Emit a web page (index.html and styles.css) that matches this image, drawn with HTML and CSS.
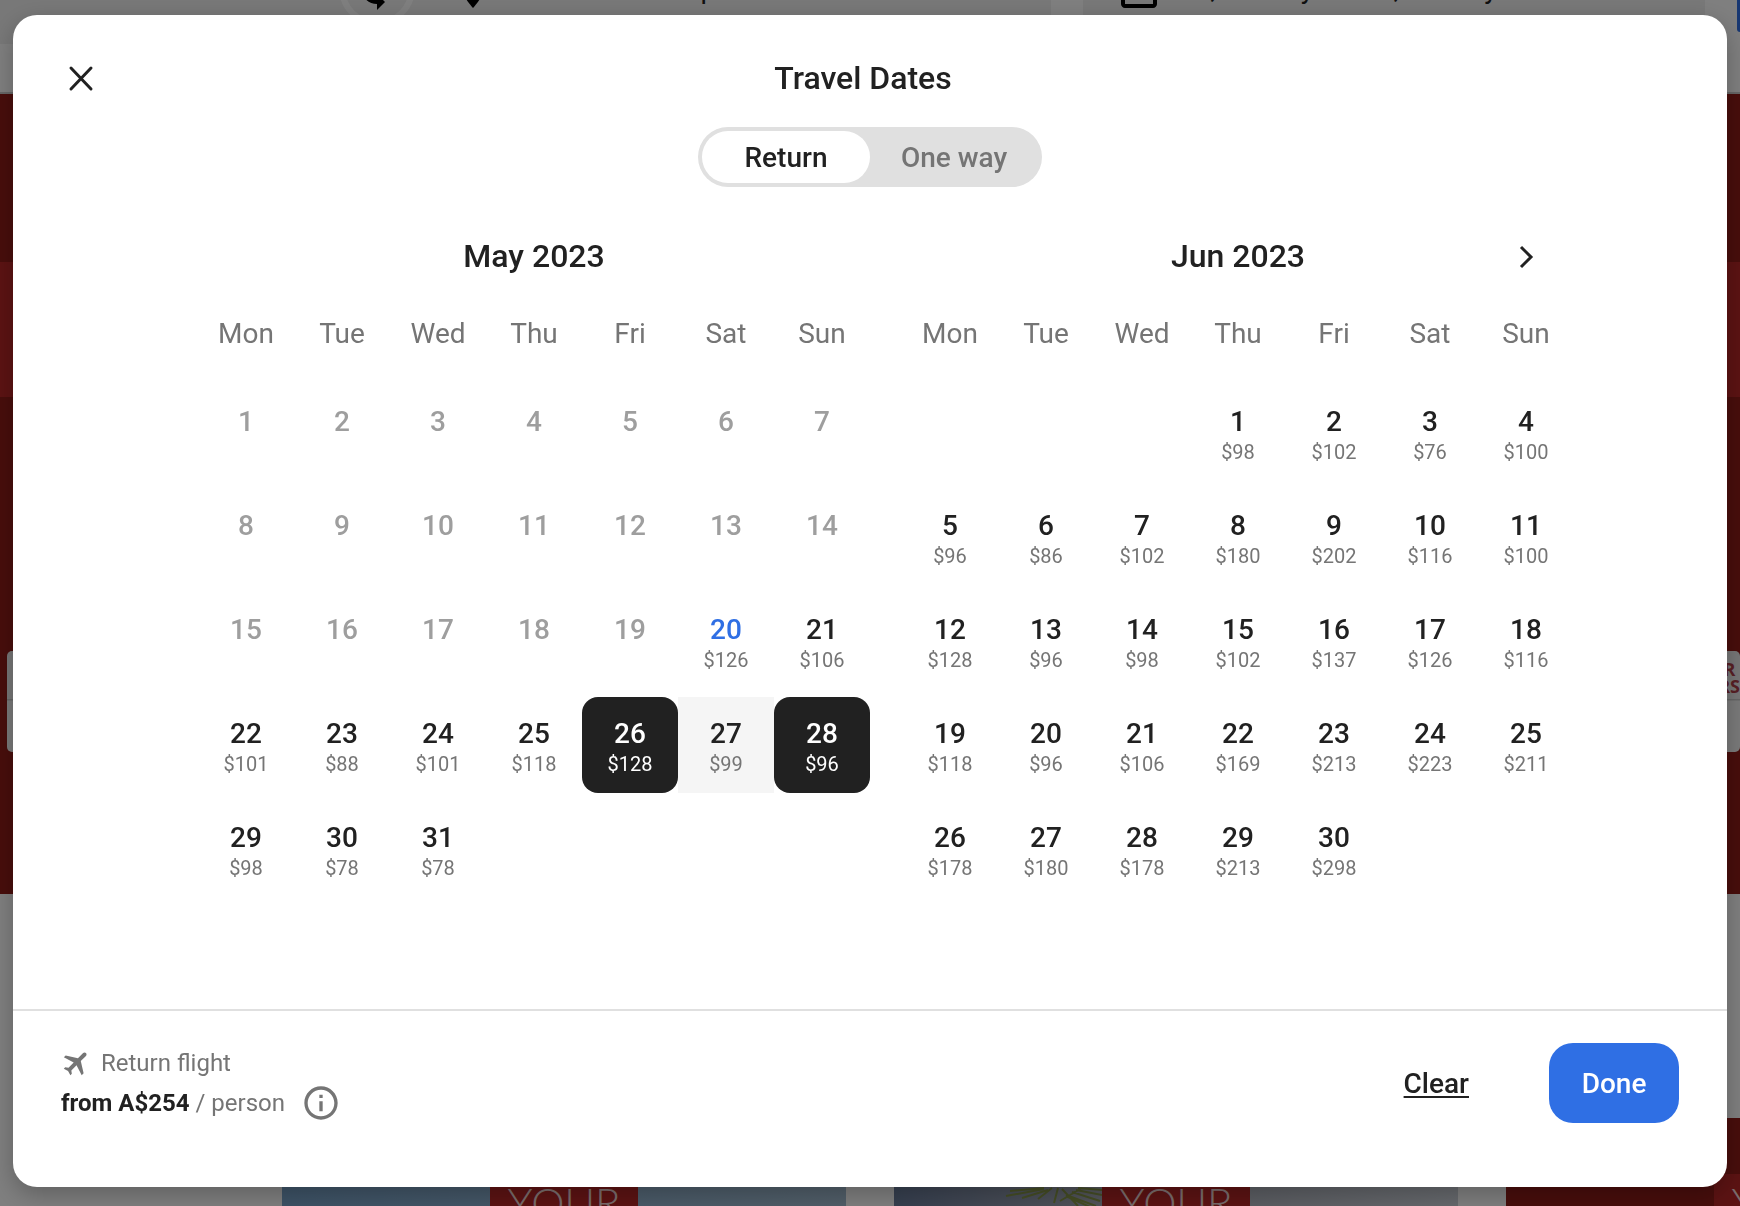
FILE: index.html
```html
<!DOCTYPE html>
<html lang="en">
<head>
    <meta charset="UTF-8">
    <meta name="viewport" content="width=device-width, initial-scale=1.0">
    <title>Travel Dates</title>
    <link rel="stylesheet" href="styles.css">
</head>
<body>
    <div class="page" aria-hidden="true">
        <div class="search-bar">
            <div class="field field-route">
                <div class="swap">
                    <svg viewBox="0 0 24 24"><path d="M12 4V1L8 5l4 4V6c3.31 0 6 2.69 6 6 0 1.01-.25 1.97-.7 2.8l1.46 1.46C19.54 15.03 20 13.57 20 12c0-4.42-3.58-8-8-8zm0 14c-3.31 0-6-2.69-6-6 0-1.01.25-1.97.7-2.8L5.24 7.74C4.46 8.97 4 10.43 4 12c0 4.42 3.58 8 8 8v3l4-4-4-4v3z"/></svg>
                </div>
                <svg class="field-icon" viewBox="0 0 24 24"><path d="M12 2C8.13 2 5 5.13 5 9c0 5.25 7 13 7 13s7-7.75 7-13c0-3.87-3.13-7-7-7z"/></svg>
                <span>Tullamarine Airport</span>
            </div>
            <div class="field field-dates">
                <svg class="field-icon" viewBox="0 0 24 24"><path d="M19 4h-1V2h-2v2H8V2H6v2H5c-1.1 0-2 .9-2 2v14c0 1.1.9 2 2 2h14c1.1 0 2-.9 2-2V6c0-1.1-.9-2-2-2zm0 16H5V9h14v11z"/></svg>
                <span>Fri, 26 May – Sun, 28 May</span>
            </div>
            <div class="search-button"></div>
        </div>
        <div class="hero">
            <div class="hero-band"></div>
            <div class="hero-cards">
                <div class="hero-card"></div>
                <div class="hero-card hero-card-next">OUR&nbsp;<br>OFFERS</div>
            </div>
        </div>
        <div class="deals">
            <div class="deal deal-sky"><div class="deal-label">YOUR</div></div>
            <div class="deal deal-palm">
                <svg class="palm" viewBox="0 0 100 20" fill="none" stroke="#8a9a4a" stroke-width="2"><path d="M8 4l34-3M4 9l38-7M20 11l26-8M36 12l14-11M52 16l4-15M58 14l22-13M64 8l30 11M70 5l28 9M74 3l26 5M66 10l22 10M60 2l16 17M76 1l24 2"/></svg>
                <div class="deal-label">YOUR</div>
            </div>
            <div class="deal deal-red"><div class="deal-label">YOUR</div></div>
        </div>
    </div>
    <div class="overlay"></div>

    <div class="modal" role="dialog" aria-labelledby="modal-title">
        <header class="modal-header">
            <button class="close" type="button" aria-label="Close">
                <svg viewBox="0 0 40 40" fill="none" stroke="#212121" stroke-width="3" stroke-linecap="round"><path d="M10 10l20 21M30 10L10 31"/></svg>
            </button>
            <h1 id="modal-title">Travel Dates</h1>
        </header>

        <div class="toggle">
            <button class="toggle-option active" type="button" aria-pressed="true">Return</button>
            <button class="toggle-option" type="button" aria-pressed="false">One way</button>
        </div>

        <div class="calendar">
            <section class="month">
                <h2>May 2023</h2>
                <table id="may"></table>
            </section>
            <section class="month">
                <h2>Jun 2023</h2>
                <button class="next" type="button" aria-label="Next month">
                    <svg viewBox="0 0 40 40" fill="none" stroke="#212121" stroke-width="3"><path d="M15 11l10 10-10 10"/></svg>
                </button>
                <table id="jun"></table>
            </section>
        </div>

        <footer class="modal-footer">
            <div class="fare">
                <div class="fare-type">
                    <svg class="plane" viewBox="0 0 24 24" fill="#757575"><path d="M21 16v-2l-8-5V3.500c0-.83-.67-1.500-1.500-1.500S10 2.670 10 3.500V9l-8 5v2l8-2.500V19l-2 1.500V22l3.500-1 3.500 1v-1.500L13 19v-5.500l8 2.500z" transform="rotate(45 12 12)"/></svg>
                    <span>Return flight</span>
                </div>
                <div class="fare-price">
                    <span><strong>from A$254</strong> / person</span>
                    <button class="info" type="button" aria-label="Fare information">
                        <svg viewBox="0 0 24 24" fill="#757575"><path d="M11 7h2v2h-2zm0 4h2v6h-2zm1-9C6.480 2 2 6.480 2 12s4.480 10 10 10 10-4.480 10-10S17.520 2 12 2zm0 18c-4.410 0-8-3.590-8-8s3.590-8 8-8 8 3.590 8 8-3.590 8-8 8z"/></svg>
                    </button>
                </div>
            </div>
            <div class="actions">
                <button class="clear" type="button">Clear</button>
                <button class="done" type="button">Done</button>
            </div>
        </footer>
    </div>
    <script src="script.js"></script>
</body>
</html>
```
FILE: styles.css
```css
* {
    box-sizing: border-box;
}
body {
    margin: 0;
    height: 100vh;
    overflow: hidden;
    font-family: Roboto, sans-serif;
    color: #212121;
    background: #fff;
}
button {
    font: inherit;
    color: inherit;
    background: none;
    border: none;
    padding: 0;
    cursor: pointer;
}
svg {
    display: block;
}

/* page behind the dialog, scrolled down a little */
.page {
    margin-top: -68px;
    font-size: 28px;
}
.search-bar {
    display: grid;
    grid-template-columns: 1051fr 622fr 3px;
    height: 162px;
    padding-bottom: 48px;
    border-bottom: 2px solid #ccc;
    gap: 32px;
}
.field {
    display: flex;
    align-items: center;
    gap: 16px;
    min-width: 0;
    padding: 0 32px;
    background: #f1f1f1;
    white-space: nowrap;
}
.field-icon {
    width: 48px;
    height: 48px;
}
.field-route {
    padding-left: 339px;
}
.swap {
    width: 76px;
    height: 76px;
    margin-right: 18px;
    padding: 8px;
    border: 6px solid #fff;
    border-radius: 50%;
}
.swap svg {
    width: 48px;
    height: 48px;
}
.search-button {
    height: 88px;
    margin-top: 12px;
    background: #2f6fe4;
    border-radius: 0 0 0 3px;
}
.hero {
    height: 800px;
    padding-top: 168px;
    background: #901c18;
}
.hero-band {
    height: 135px;
    background: #b82626;
}
.hero-cards {
    display: flex;
    justify-content: space-between;
    padding: 254px 0 0 7px;
}
.hero-card {
    width: 90px;
    height: 101px;
    background: linear-gradient(#eee 47%, #ccc 48%, #f4f4f4 50%);
    border-radius: 5px;
}
.hero-card-next {
    padding-top: 10px;
    color: #b0404a;
    font-family: "Open Sans", sans-serif;
    font-size: 18px;
    font-weight: 700;
    line-height: 17px;
    text-align: right;
}
.deals {
    display: flex;
    gap: 48px;
    margin: 224px 0 0 282px;
}
.deal {
    display: flex;
    flex: none;
    justify-content: center;
    width: 564px;
    height: 88px;
    padding-top: 56px;
    overflow: hidden;
}
.deal-sky {
    background: linear-gradient(90deg, #7aa5cc, #a3bdd2);
}
.deal-palm {
    background: linear-gradient(90deg, #6c7e9e, #a4a8b4 35%, #cdd2da);
}
.deal-red {
    flex: 1;
    justify-content: flex-start;
    padding-left: 208px;
    background: #901c18;
}
.deal-label {
    flex: none;
    width: 148px;
    background: #b82626;
    color: #f4d8d8;
    font-family: Lato, sans-serif;
    font-size: 42px;
    font-weight: 300;
    line-height: 56px;
    text-align: center;
}
.palm {
    width: 100px;
    height: 20px;
    margin-top: 13px;
}
.deal-palm .deal-label {
    margin-right: 100px;
}
.overlay {
    position: fixed;
    inset: 0;
    background: rgba(0, 0, 0, 0.5);
}

/* dialog */
.modal {
    position: fixed;
    inset: 15px 13px 19px;
    display: flex;
    flex-direction: column;
    background: #fff;
    border-radius: 24px;
    box-shadow: 0 8px 24px rgba(0, 0, 0, 0.25);
}
.modal-header {
    display: flex;
    align-items: center;
    padding: 43px 102px 29px 48px;
}
.modal-header h1 {
    flex: 1;
    margin: 0;
    font-size: 32px;
    font-weight: 500;
    line-height: 40px;
    text-align: center;
}
.close,
.close svg,
.next svg {
    width: 40px;
    height: 40px;
}
.toggle {
    display: grid;
    grid-template-columns: 1fr 1fr;
    align-self: center;
    width: 344px;
    height: 60px;
    padding: 4px;
    background: #e0e0e0;
    border-radius: 30px;
}
.toggle-option {
    border-radius: 26px;
    color: #757575;
    font-size: 28px;
    font-weight: 500;
}
.toggle-option.active {
    background: #fff;
    color: #212121;
}
.calendar {
    display: grid;
    grid-template-columns: 1fr 1fr;
    flex: 1;
    width: 100%;
    max-width: 1408px;
    margin: 0 auto;
    padding-top: 48px;
}
.month {
    position: relative;
    padding-left: 32px;
}
.month h2 {
    margin: 0 0 12px;
    font-size: 32px;
    font-weight: 500;
    line-height: 42px;
    text-align: center;
}
.next {
    position: absolute;
    top: 1px;
    right: 28px;
}
.month table {
    width: 100%;
    table-layout: fixed;
    border-spacing: 0 8px;
}
.month th {
    height: 80px;
    padding: 0 0 8px;
    color: #757575;
    font-size: 28px;
    font-weight: 400;
}
.month td {
    height: 96px;
    padding: 0;
    vertical-align: top;
}
.day {
    display: flex;
    flex-direction: column;
    align-items: center;
    width: 100%;
    height: 96px;
    padding-top: 21px;
    border-radius: 16px;
    font-size: 28px;
    font-weight: 500;
    line-height: 32px;
}
.day small {
    color: #757575;
    font-size: 20px;
    font-weight: 400;
    line-height: 28px;
}
.day:disabled {
    color: #9e9e9e;
    cursor: default;
}
.day.today {
    color: #2f6fe4;
}
.day.between {
    background: #f5f5f5;
    border-radius: 0;
}
.day.selected {
    background: #212121;
}
.day.selected,
.day.selected small {
    color: #fff;
}
.modal-footer {
    display: flex;
    justify-content: space-between;
    padding: 32px 48px 64px;
    border-top: 2px solid #e0e0e0;
}
.fare {
    color: #757575;
    font-size: 24px;
    line-height: 40px;
}
.fare strong {
    color: #212121;
}
.fare-type,
.fare-price {
    display: flex;
    align-items: center;
}
.fare-type {
    gap: 8px;
}
.plane {
    width: 32px;
    height: 32px;
}
.fare-price {
    gap: 16px;
}
.info svg {
    width: 40px;
    height: 40px;
}
.actions {
    display: flex;
    align-items: center;
    gap: 80px;
    font-size: 28px;
    font-weight: 500;
}
.clear {
    text-decoration: underline;
    text-decoration-thickness: 2px;
    text-underline-offset: 3px;
}
.done {
    min-width: 130px;
    height: 80px;
    padding: 0 32px;
    background: #2f6fe4;
    border-radius: 24px;
    color: #fff;
}
```
FILE: script.js
```javascript
const weekdays = ['Mon', 'Tue', 'Wed', 'Thu', 'Fri', 'Sat', 'Sun'];

const may = {
    offset: 0,
    days: 31,
    firstPrice: 20,
    prices: [126, 106, 101, 88, 101, 118, 128, 99, 96, 98, 78, 78],
    classes: { 20: 'today', 26: 'selected', 27: 'between', 28: 'selected' }
};
const jun = {
    offset: 3,
    days: 30,
    firstPrice: 1,
    prices: [98, 102, 76, 100, 96, 86, 102, 180, 202, 116, 100, 128, 96, 98, 102,
        137, 126, 116, 118, 96, 106, 169, 213, 223, 211, 178, 180, 178, 213, 298],
    classes: {}
};

function drawMonth(id, month) {
    let html = '<thead><tr>' + weekdays.map(d => `<th scope="col">${d}</th>`).join('') + '</tr></thead><tbody>';
    for (let start = 1 - month.offset; start <= month.days; start += 7) {
        html += '<tr>';
        for (let day = start; day < start + 7; day++) {
            if (day < 1 || day > month.days) {
                html += '<td></td>';
                continue;
            }
            const price = month.prices[day - month.firstPrice];
            html += `<td><button type="button" class="day ${month.classes[day] || ''}" ${price ? '' : 'disabled'}>${day}`;
            html += price ? `<small>$${price}</small>` : '';
            html += '</button></td>';
        }
        html += '</tr>';
    }
    document.getElementById(id).innerHTML = html + '</tbody>';
}

drawMonth('may', may);
drawMonth('jun', jun);
```
